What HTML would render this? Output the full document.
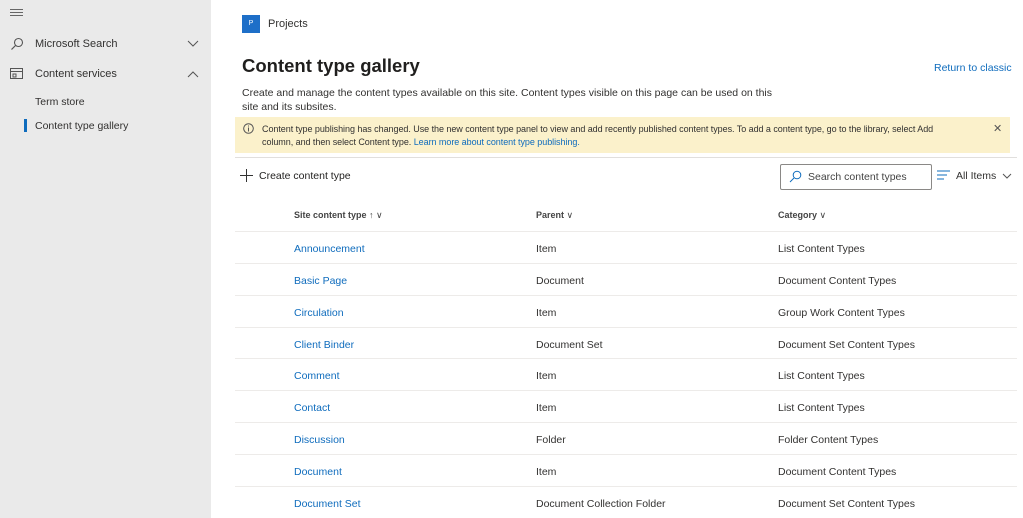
<html><head><style>
body{margin:0;width:1023px;height:518px;overflow:hidden;font-family:"Liberation Sans",sans-serif;background:#fff;position:relative;color:#323130}
.a{position:absolute;white-space:nowrap}
#side{position:absolute;left:0;top:0;width:211px;height:518px;background:#eaeaea}
.lnk{color:#0f6cbd}
.row{position:absolute;left:235px;width:782px;height:31px;border-top:1px solid #edebe9;font-size:10.5px}
.row span{position:absolute;top:11px}
</style></head><body>
<div id="side">
<div class="a" style="left:10px;top:9px;width:13px;height:1px;background:#666;box-shadow:0 3px #666,0 6px #666"></div>
<svg class="a" style="left:10px;top:37px" width="14" height="14" viewBox="0 0 14 14"><circle cx="8.5" cy="5.5" r="4" fill="none" stroke="#555" stroke-width="1.1"/><path d="M5.5 8.5L1.5 12.5" stroke="#555" stroke-width="1.2"/></svg>
<div class="a" style="left:35px;top:38px;font-size:11px">Microsoft Search</div>
<svg class="a" style="left:187px;top:40px" width="12" height="7"><path d="M1 1L6 6L11 1" fill="none" stroke="#555"/></svg>
<svg class="a" style="left:10px;top:68px" width="14" height="12"><rect x="0.5" y="0.5" width="12" height="10" fill="none" stroke="#555"/><path d="M0.5 3.5H12.5M3 6h3v3H3z" fill="none" stroke="#555"/></svg>
<div class="a" style="left:35px;top:68px;font-size:11px">Content services</div>
<svg class="a" style="left:187px;top:71px" width="12" height="7"><path d="M1 6L6 1L11 6" fill="none" stroke="#555"/></svg>
<div class="a" style="left:35px;top:96px;font-size:10.5px">Term store</div>
<div class="a" style="left:24px;top:119px;width:3px;height:13px;background:#0f6cbd"></div>
<div class="a" style="left:35px;top:120px;font-size:10.5px">Content type gallery</div>
</div>
<div class="a" style="left:242px;top:15px;width:18px;height:18px;background:#1e6fc8;color:#fff;font-size:7px;text-align:center;line-height:18px">P</div>
<div class="a" style="left:268px;top:18px;font-size:11px">Projects</div>
<div class="a" style="left:242px;top:55px;font-size:18.5px;font-weight:bold;color:#201f1e">Content type gallery</div>
<div class="a lnk" style="left:934px;top:62px;font-size:10.5px">Return to classic</div>
<div class="a" style="left:242px;top:86px;font-size:10.5px;line-height:14px">Create and manage the content types available on this site. Content types visible on this page can be used on this<br>site and its subsites.</div>
<div class="a" style="left:235px;top:117px;width:775px;height:36px;background:#fbf1cb"></div>
<svg class="a" style="left:243px;top:123px" width="11" height="11"><circle cx="5.5" cy="5.5" r="4.8" fill="none" stroke="#555"/><path d="M5.5 4.5v4M5.5 2.5v1" stroke="#555"/></svg>
<div class="a" style="left:262px;top:123px;font-size:9px;line-height:13px;letter-spacing:-0.05px">Content type publishing has changed. Use the new content type panel to view and add recently published content types. To add a content type, go to the library, select Add<br>column, and then select Content type. <span class="lnk">Learn more about content type publishing.</span></div>
<div class="a" style="left:993px;top:122px;font-size:11px;color:#555">✕</div>
<div class="a" style="left:235px;top:157px;width:782px;height:1px;background:#e1dfdd"></div>
<svg class="a" style="left:240px;top:169px" width="13" height="13"><path d="M6.5 0v13M0 6.5h13" stroke="#333"/></svg>
<div class="a" style="left:259px;top:170px;font-size:10.5px;color:#201f1e">Create content type</div>
<div class="a" style="left:780px;top:164px;width:150px;height:24px;border:1px solid #8a8886;border-radius:2px"></div>
<svg class="a" style="left:789px;top:170px" width="13" height="13"><circle cx="8" cy="5" r="3.8" fill="none" stroke="#0f6cbd"/><path d="M5 8L1 12" stroke="#0f6cbd"/></svg>
<div class="a" style="left:808px;top:171px;font-size:10.5px;color:#444">Search content types</div>
<svg class="a" style="left:937px;top:170px" width="13" height="10"><path d="M0 1h13M0 5h10M0 9h7" stroke="#0f6cbd"/></svg>
<div class="a" style="left:956px;top:170px;font-size:10.5px">All Items</div>
<svg class="a" style="left:1002px;top:173px" width="10" height="6"><path d="M1 1L5 5L9 1" fill="none" stroke="#555"/></svg>
<div class="a" style="left:294px;top:210px;font-size:9px;font-weight:bold;color:#444">Site content type ↑ <span style="font-weight:normal">∨</span></div>
<div class="a" style="left:536px;top:210px;font-size:9px;font-weight:bold;color:#444">Parent <span style="font-weight:normal">∨</span></div>
<div class="a" style="left:778px;top:210px;font-size:9px;font-weight:bold;color:#444">Category <span style="font-weight:normal">∨</span></div>
<div class="row" style="top:231px"><span class="lnk" style="left:59px">Announcement</span><span style="left:301px">Item</span><span style="left:543px">List Content Types</span></div>
<div class="row" style="top:263px"><span class="lnk" style="left:59px">Basic Page</span><span style="left:301px">Document</span><span style="left:543px">Document Content Types</span></div>
<div class="row" style="top:295px"><span class="lnk" style="left:59px">Circulation</span><span style="left:301px">Item</span><span style="left:543px">Group Work Content Types</span></div>
<div class="row" style="top:327px"><span class="lnk" style="left:59px">Client Binder</span><span style="left:301px">Document Set</span><span style="left:543px">Document Set Content Types</span></div>
<div class="row" style="top:358px"><span class="lnk" style="left:59px">Comment</span><span style="left:301px">Item</span><span style="left:543px">List Content Types</span></div>
<div class="row" style="top:390px"><span class="lnk" style="left:59px">Contact</span><span style="left:301px">Item</span><span style="left:543px">List Content Types</span></div>
<div class="row" style="top:422px"><span class="lnk" style="left:59px">Discussion</span><span style="left:301px">Folder</span><span style="left:543px">Folder Content Types</span></div>
<div class="row" style="top:454px"><span class="lnk" style="left:59px">Document</span><span style="left:301px">Item</span><span style="left:543px">Document Content Types</span></div>
<div class="row" style="top:486px"><span class="lnk" style="left:59px">Document Set</span><span style="left:301px">Document Collection Folder</span><span style="left:543px">Document Set Content Types</span></div>
</body></html>
